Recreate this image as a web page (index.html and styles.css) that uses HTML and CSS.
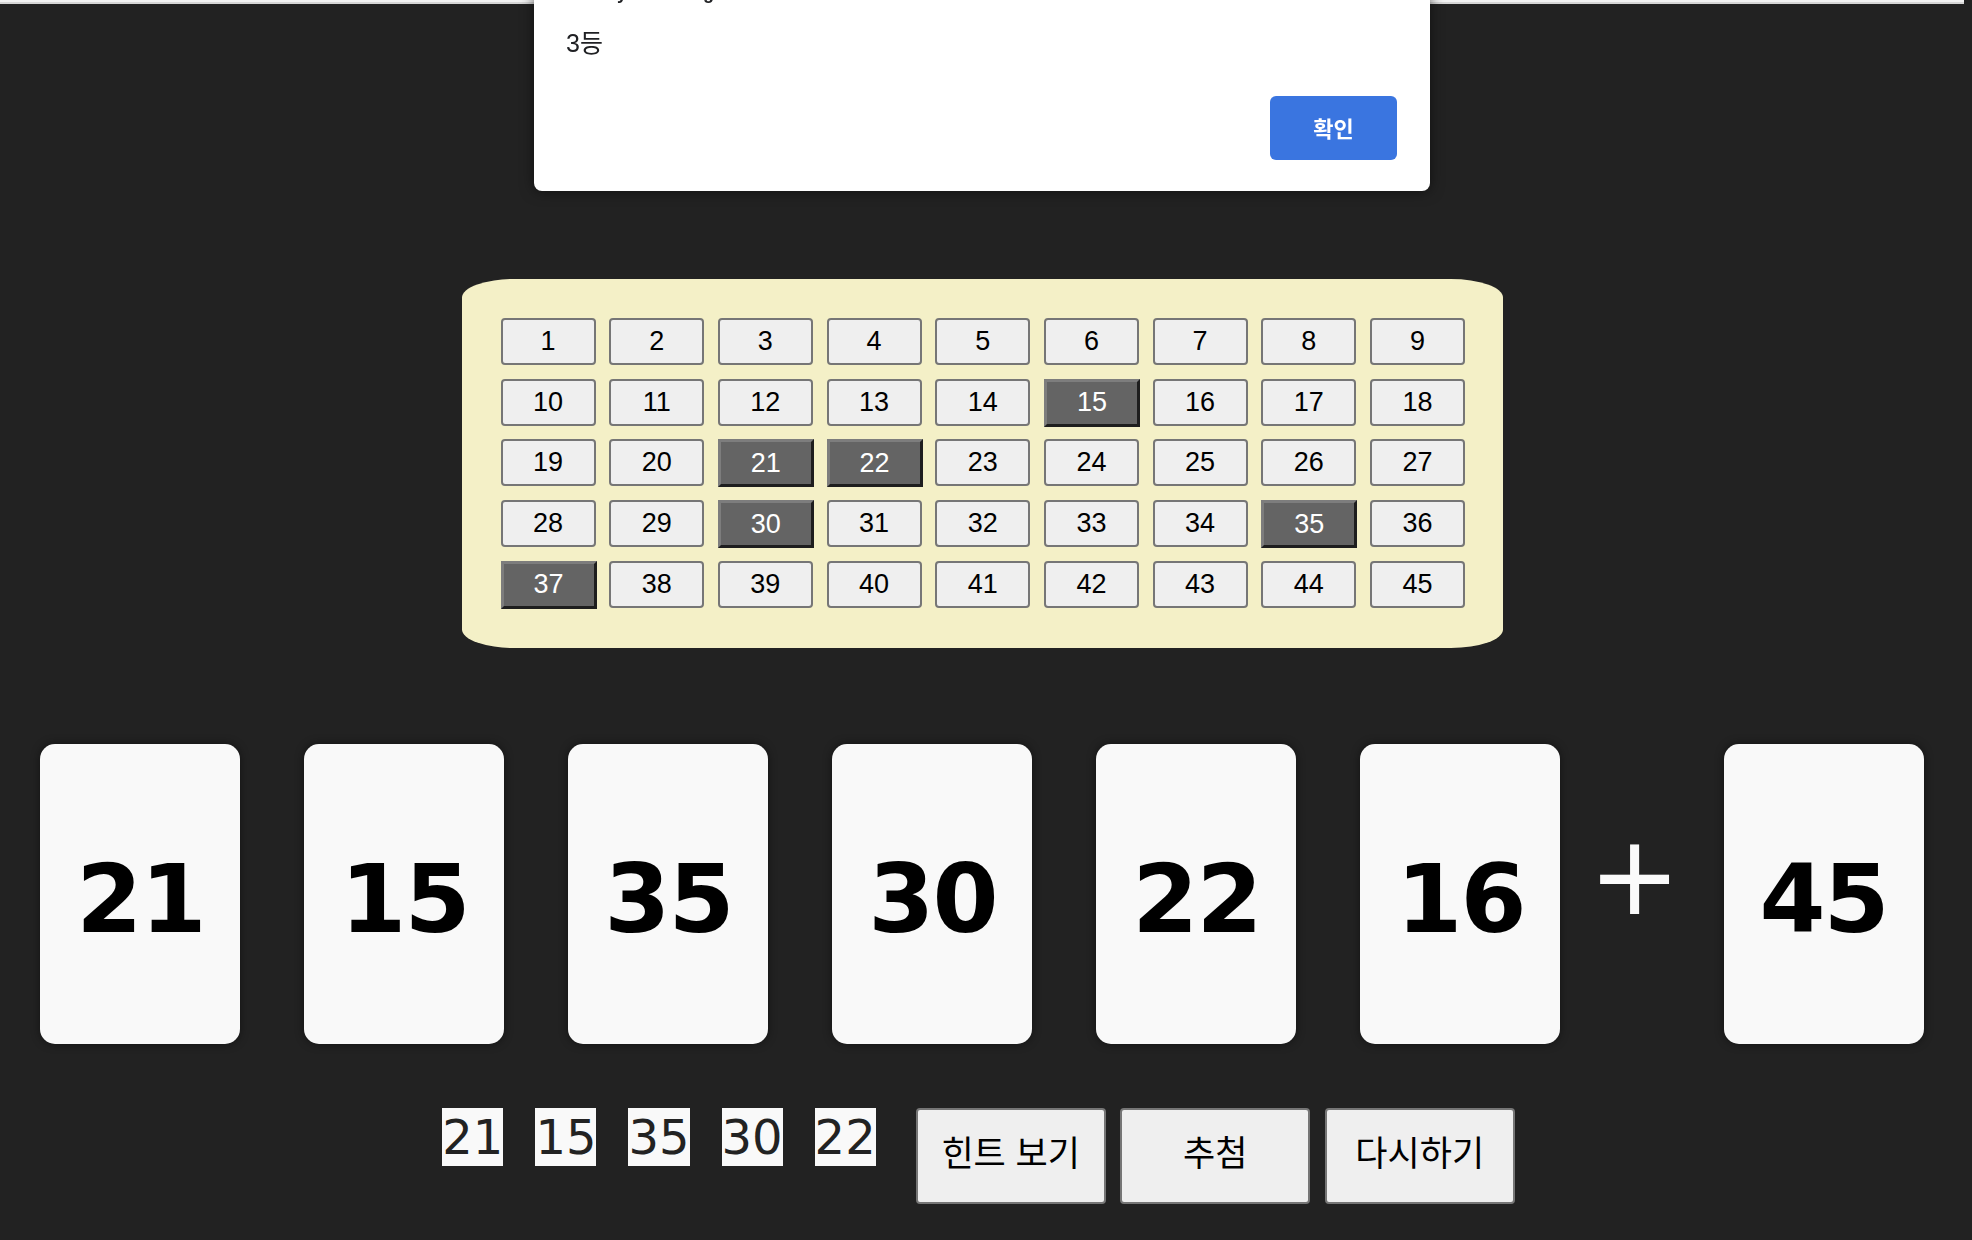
FILE: index.html
```html
<!DOCTYPE html>
<html lang="ko">
<head>
<meta charset="utf-8">
<title>로또 게임</title>
<link rel="stylesheet" href="styles.css">
</head>
<body>
<div class="page">
  <div class="topline"></div>

  <div class="board">
    <button class="num">1</button><button class="num">2</button><button class="num">3</button><button class="num">4</button><button class="num">5</button><button class="num">6</button><button class="num">7</button><button class="num">8</button><button class="num">9</button>
    <button class="num">10</button><button class="num">11</button><button class="num">12</button><button class="num">13</button><button class="num">14</button><button class="num on">15</button><button class="num">16</button><button class="num">17</button><button class="num">18</button>
    <button class="num">19</button><button class="num">20</button><button class="num on">21</button><button class="num on">22</button><button class="num">23</button><button class="num">24</button><button class="num">25</button><button class="num">26</button><button class="num">27</button>
    <button class="num">28</button><button class="num">29</button><button class="num on">30</button><button class="num">31</button><button class="num">32</button><button class="num">33</button><button class="num">34</button><button class="num on">35</button><button class="num">36</button>
    <button class="num on">37</button><button class="num">38</button><button class="num">39</button><button class="num">40</button><button class="num">41</button><button class="num">42</button><button class="num">43</button><button class="num">44</button><button class="num">45</button>
  </div>

  <div class="cards">
    <div class="card">21</div>
    <div class="card">15</div>
    <div class="card">35</div>
    <div class="card">30</div>
    <div class="card">22</div>
    <div class="card">16</div>
    <div class="plus">+</div>
    <div class="card">45</div>
  </div>

  <div class="bottom">
    <div class="picks">
      <span class="pick">21</span>
      <span class="pick">15</span>
      <span class="pick">35</span>
      <span class="pick">30</span>
      <span class="pick">22</span>
    </div>
    <div class="actions">
      <button class="act">힌트 보기</button>
      <button class="act">추첨</button>
      <button class="act">다시하기</button>
    </div>
  </div>
</div>

<div class="dialog">
  <div class="dlg-title">Lottery number game</div>
  <div class="dlg-msg">3등</div>
  <div class="dlg-actions"><button class="dlg-ok">확인</button></div>
</div>
</body>
</html>
```

FILE: styles.css
```css
html, body {
  margin: 0;
  padding: 0;
  background: #222222;
  overflow: hidden;
}

.page {
  width: 1964px;
  height: 1240px;
}

.topline {
  height: 2px;
  background: #f2f2f2;
  border-bottom: 2px solid #d6d6d6;
}

.board {
  width: 1041px;
  box-sizing: border-box;
  margin: 275px auto 0;
  padding: 39px 37px 40px 39px;
  background: #f4f0c7;
  border-radius: 5% / 5%;
  display: grid;
  grid-template-columns: repeat(9, 95px);
  grid-auto-rows: 47px;
  column-gap: 13.7px;
  row-gap: 13.7px;
}

.num {
  box-sizing: border-box;
  width: 95px;
  height: 47px;
  margin: 0;
  padding: 0;
  background: #efefef;
  border: 2px solid #767676;
  border-radius: 4px;
  font-family: "Liberation Sans", Arial, sans-serif;
  font-size: 27px;
  color: #000;
}

.num.on {
  background: #646464;
  color: #fff;
  border: 3px solid;
  border-color: #7d7d7d #1e1e1e #1e1e1e #7d7d7d;
  border-radius: 0;
  height: 48px;
  width: 96px;
}

.cards {
  margin-top: 96px;
  display: flex;
  justify-content: center;
  align-items: center;
}

.card {
  box-sizing: border-box;
  width: 200px;
  height: 300px;
  margin: 0 32px;
  padding-top: 10px;
  background: #f9f9f9;
  border-radius: 15px;
  box-shadow: 0 0 10px rgba(0, 0, 0, 0.45);
  display: flex;
  align-items: center;
  justify-content: center;
  font-family: "DejaVu Sans", Verdana, sans-serif;
  font-weight: bold;
  font-size: 95px;
  letter-spacing: -2px;
  color: #000;
}

.plus {
  font-family: "DejaVu Sans", Verdana, sans-serif;
  font-size: 110px;
  color: #fafafa;
  line-height: 1;
  margin-top: -36px;
  margin-left: -4px;
  margin-right: 11px;
}

.bottom {
  margin-top: 64px;
  padding-right: 7px;
  display: flex;
  justify-content: center;
  align-items: flex-start;
}

.picks {
  display: flex;
  gap: 32px;
}

.pick {
  background: #f9f9f9;
  color: #222;
  font-family: "DejaVu Sans", Verdana, sans-serif;
  font-size: 48px;
  line-height: 58px;
}

.actions {
  display: flex;
  gap: 14.5px;
  margin-left: 40px;
}

.act {
  box-sizing: border-box;
  width: 190px;
  height: 96px;
  margin: 0;
  padding: 0 0 10px;
  background: #efefef;
  border: 2px solid #767676;
  border-radius: 4px;
  font-family: "Noto Sans CJK KR", sans-serif;
  font-size: 35px;
  color: #000;
}

.dialog {
  position: fixed;
  left: 534px;
  top: -40px;
  width: 896px;
  box-sizing: border-box;
  padding: 22px 33px 31px 32px;
  background: #ffffff;
  border-radius: 8px;
  box-shadow: 0 0 14px rgba(0, 0, 0, 0.55);
}

.dlg-title {
  font-family: "Liberation Sans", Arial, sans-serif;
  font-weight: bold;
  font-size: 18px;
  line-height: 22px;
  color: #202124;
}

.dlg-msg {
  margin-top: 23px;
  font-family: "Liberation Sans", "Noto Sans CJK KR", sans-serif;
  font-size: 25px;
  line-height: 32px;
  color: #202124;
}

.dlg-actions {
  margin-top: 37px;
  display: flex;
  justify-content: flex-end;
}

.dlg-ok {
  width: 127px;
  height: 64px;
  margin: 0;
  padding: 0 0 2px;
  border: none;
  border-radius: 6px;
  background: #3a75e0;
  color: #fff;
  font-family: "Noto Sans CJK KR", sans-serif;
  font-weight: bold;
  font-size: 22px;
}
```
